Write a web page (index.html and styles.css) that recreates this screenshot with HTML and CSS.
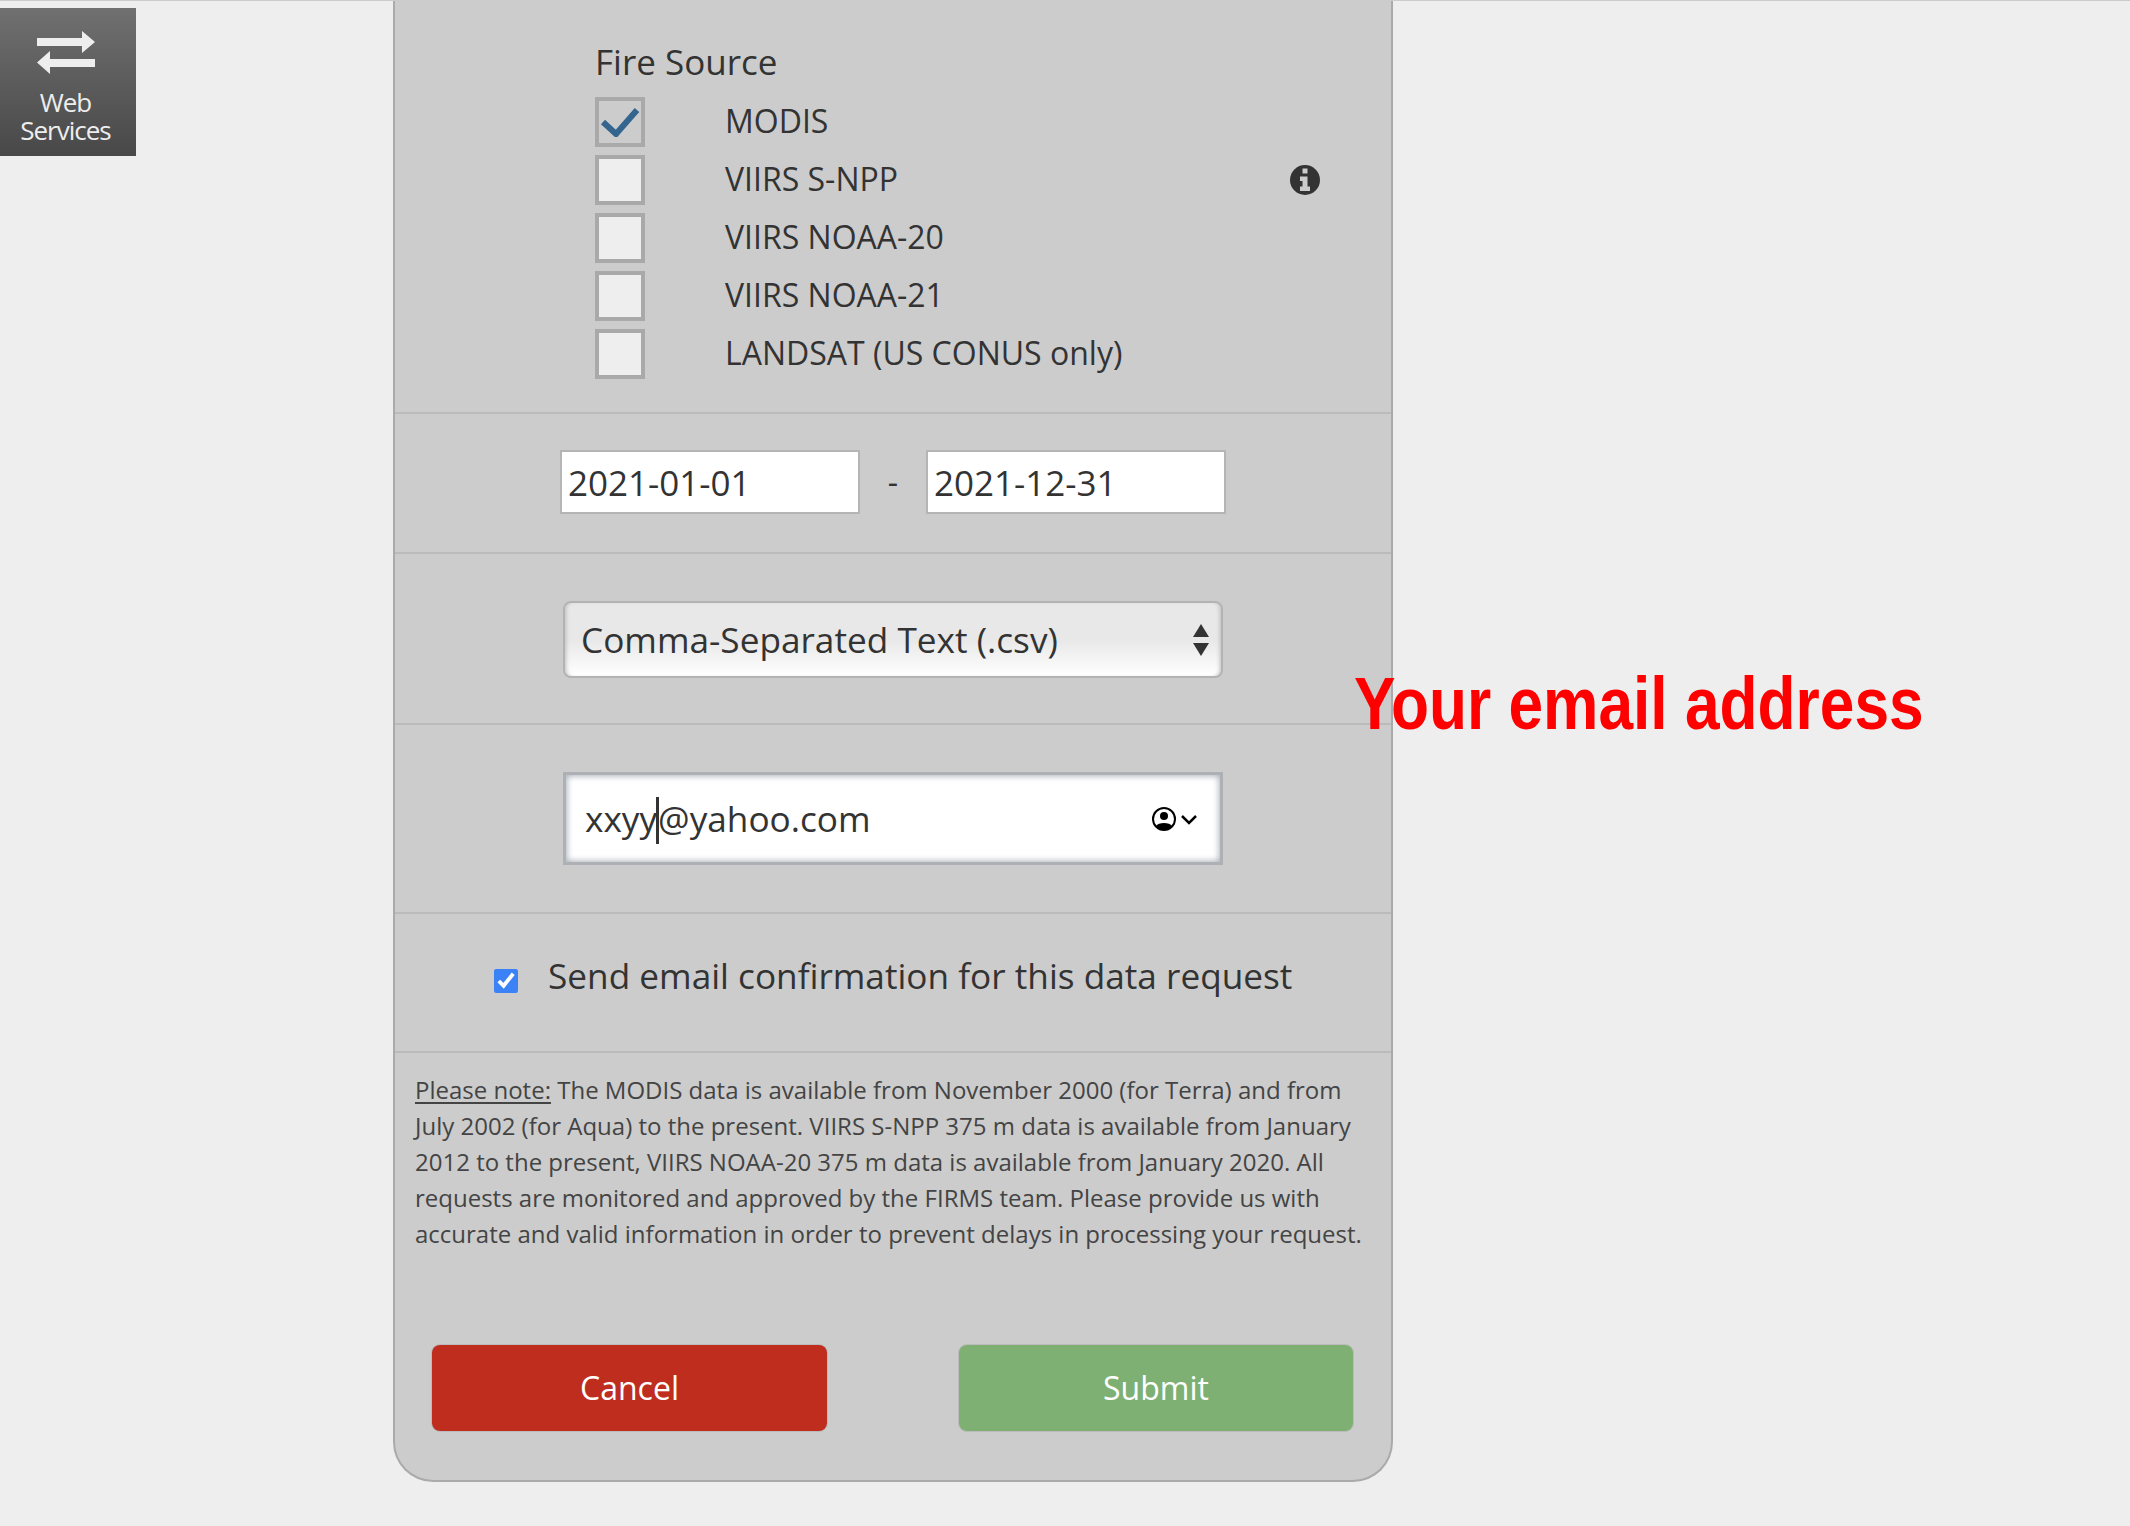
FILE: index.html
```html
<!DOCTYPE html>
<html lang="en">
<head>
  <meta charset="utf-8">
  <title>Web Services: Fire Data Request</title>
  <link rel="stylesheet" href="styles.css">
</head>
<body>
  <a class="side-tab" href="#">
    <svg class="side-icon" viewBox="0 0 58 44" width="58" height="44">
      <path d="M0 7h45V0l13 11-13 11v-7H0zM58 36H13v7L0 31.500 13 20v8h45z" fill="#eee"/>
    </svg>
    <span>Web Services</span>
  </a>

  <form class="panel">
    <div class="section sources">
      <div class="sources-title">Fire Source</div>
      <div class="source-row"><span class="box checked"><svg viewBox="0 0 40 30" width="40" height="30"><path d="M3 15l13 12L37 3" fill="none" stroke="#34658f" stroke-width="6"/></svg></span><span class="source-label">MODIS</span></div>
      <div class="source-row"><span class="box"></span><span class="source-label">VIIRS S-NPP</span>
        <svg class="info" viewBox="0 0 30 30" width="30" height="30"><circle cx="15" cy="15" r="15" fill="#333"/><path d="M12.500 3.500h5v5h-5zM10 11.500h7.500v10h2.500v4.500H10v-4.500h2.500v-5.500H10z" fill="#ccc"/></svg>
      </div>
      <div class="source-row"><span class="box"></span><span class="source-label">VIIRS NOAA-20</span></div>
      <div class="source-row"><span class="box"></span><span class="source-label">VIIRS NOAA-21</span></div>
      <div class="source-row"><span class="box"></span><span class="source-label">LANDSAT (US CONUS only)</span></div>
    </div>

    <div class="section dates">
      <div class="date-field">2021-01-01</div>
      <span class="date-sep">-</span>
      <div class="date-field">2021-12-31</div>
    </div>

    <div class="section format">
      <div class="select-field">
        <span>Comma-Separated Text (.csv)</span>
        <span class="select-arrows"></span>
      </div>
    </div>

    <div class="section email">
      <div class="email-field">
        <span class="email-value">xxyy<i class="caret"></i>@yahoo.com</span>
        <svg viewBox="0 0 46 24" width="46" height="24">
          <circle cx="12" cy="12" r="11" fill="#fff" stroke="#000" stroke-width="2"/>
          <circle cx="12" cy="9" r="4" fill="#000"/>
          <path d="M4 19c2-4 14-4 16 0-4 5-12 5-16 0z" fill="#000"/>
          <path d="M30 9l7 7 7-7" fill="none" stroke="#000" stroke-width="2.500"/>
        </svg>
      </div>
    </div>

    <div class="section confirm">
      <input class="confirm-check" type="checkbox" checked>
      <span>Send email confirmation for this data request</span>
    </div>

    <p class="note"><u>Please note:</u> The MODIS data is available from November 2000 (for Terra) and from July 2002 (for Aqua) to the present. VIIRS S-NPP 375 m data is available from January 2012 to the present, VIIRS NOAA-20 375 m data is available from January 2020. All requests are monitored and approved by the FIRMS team. Please provide us with accurate and valid information in order to prevent delays in processing your request.</p>

    <div class="actions">
      <button class="btn btn-cancel" type="button">Cancel</button>
      <button class="btn btn-submit" type="button">Submit</button>
    </div>
  </form>

  <div class="callout">Your email address</div>
</body>
</html>
```

FILE: styles.css
```css
* { box-sizing: border-box; }
html, body { height: 100%; }
body {
  margin: 0;
  background: #eee;
  border-top: 1px solid #ccc;
  color: #333;
  font-family: "Open Sans", "Noto Sans", sans-serif;
  overflow: hidden;
  position: relative;
}
.side-tab {
  position: absolute;
  left: 0;
  top: 7px;
  width: 136px;
  height: 148px;
  padding: 23px 5px 0 0;
  background: linear-gradient(#707070, #484848);
  color: #eee;
  font-size: 26px;
  line-height: 28px;
  letter-spacing: -1px;
  text-align: center;
  text-decoration: none;
}
.side-icon { display: block; margin: 0 auto 13px; }
.side-tab span { display: block; width: 110px; margin: 0 auto; }

.panel {
  width: 1000px;
  height: 1481px;
  margin-left: 393px;
  background: #ccc;
  border: 2px solid #aaa;
  border-top: 0;
  border-radius: 0 0 40px 40px;
}
.section { border-bottom: 2px solid #bbb; }

.sources { height: 413px; padding: 38px 0 0 200px; }
.sources-title { font-size: 35px; line-height: 46px; margin-bottom: 12px; }
.source-row { display: flex; align-items: center; height: 50px; margin-bottom: 8px; position: relative; }
.box {
  width: 50px;
  height: 50px;
  border: 4px solid #a9a9a9;
  background: #eee;
  display: flex;
  align-items: center;
  justify-content: center;
}
.box.checked { background: #ccc; }
.source-label { margin-left: 80px; padding-bottom: 3px; font-size: 32px; }
.info { position: absolute; left: 695px; top: 10px; }

.dates { height: 140px; display: flex; align-items: flex-start; padding: 36px 0 0 165px; }
.date-field {
  width: 300px;
  height: 64px;
  border: 2px solid #b5b5b5;
  background: #fff;
  font-size: 35px;
  line-height: 62px;
  padding-left: 6px;
}
.date-sep { width: 66px; text-align: center; font-size: 32px; line-height: 64px; }

.format { height: 171px; padding: 47px 0 0 168px; }
.select-field {
  width: 660px;
  height: 77px;
  border: 2px solid #b3b3b3;
  border-radius: 8px;
  background: linear-gradient(#e8e8e8 50%, #fff);
  box-shadow: inset 4px 0 4px -3px #bbb, inset -4px 0 4px -3px #bbb;
  font-size: 35.200px;
  padding: 0 12px 2px 16px;
  display: flex;
  align-items: center;
  justify-content: space-between;
}
.select-arrows { width: 16px; height: 32px; position: relative; top: 1px; }
.select-arrows::before, .select-arrows::after {
  content: "";
  position: absolute;
  left: 0;
  border-left: 8px solid transparent;
  border-right: 8px solid transparent;
}
.select-arrows::before { top: 0; border-bottom: 13px solid #333; }
.select-arrows::after { bottom: 0; border-top: 13px solid #333; }

.email { height: 189px; padding: 47px 0 0 168px; }
.email-field {
  width: 660px;
  height: 93px;
  border: 3px solid #adb1b6;
  background: #fff;
  box-shadow: inset 0 0 6px 1px #a9aeb8;
  font-size: 35.200px;
  padding: 0 22px 0 19px;
  display: flex;
  align-items: center;
  justify-content: space-between;
}
.caret { display: inline-block; width: 3px; height: 47px; background: #333; margin: 0 -1px; vertical-align: -12px; }

.confirm { height: 139px; display: flex; align-items: center; padding: 0 0 16px 99px; font-size: 35.200px; }
.confirm-check { width: 24px; height: 24px; margin: 13px 30px 0 0; accent-color: #3b82f6; }

.note { margin: 0; padding: 19px 20px 0 20px; height: 292px; font-size: 24px; line-height: 36px; color: #444; }
.note u { text-underline-offset: 3px; }

.actions { display: flex; justify-content: space-between; padding: 0 38px 0 37px; }
.btn {
  width: 395px;
  height: 86px;
  padding-bottom: 3px;
  border: 0;
  border-radius: 8px;
  box-shadow: 0 0 0 1px #bbb;
  color: #fff;
  font-family: inherit;
  font-size: 32px;
}
.btn-submit { width: 394px; background: #7eb073; }
.btn-cancel { background: #bf2d1f; }

.callout {
  position: absolute;
  left: 1354px;
  top: 662px;
  color: #f00;
  font-family: "Liberation Sans", Arial, sans-serif;
  font-weight: 700;
  font-size: 75px;
  line-height: 80px;
  white-space: nowrap;
  transform: scaleX(.83);
  transform-origin: left top;
}
```
